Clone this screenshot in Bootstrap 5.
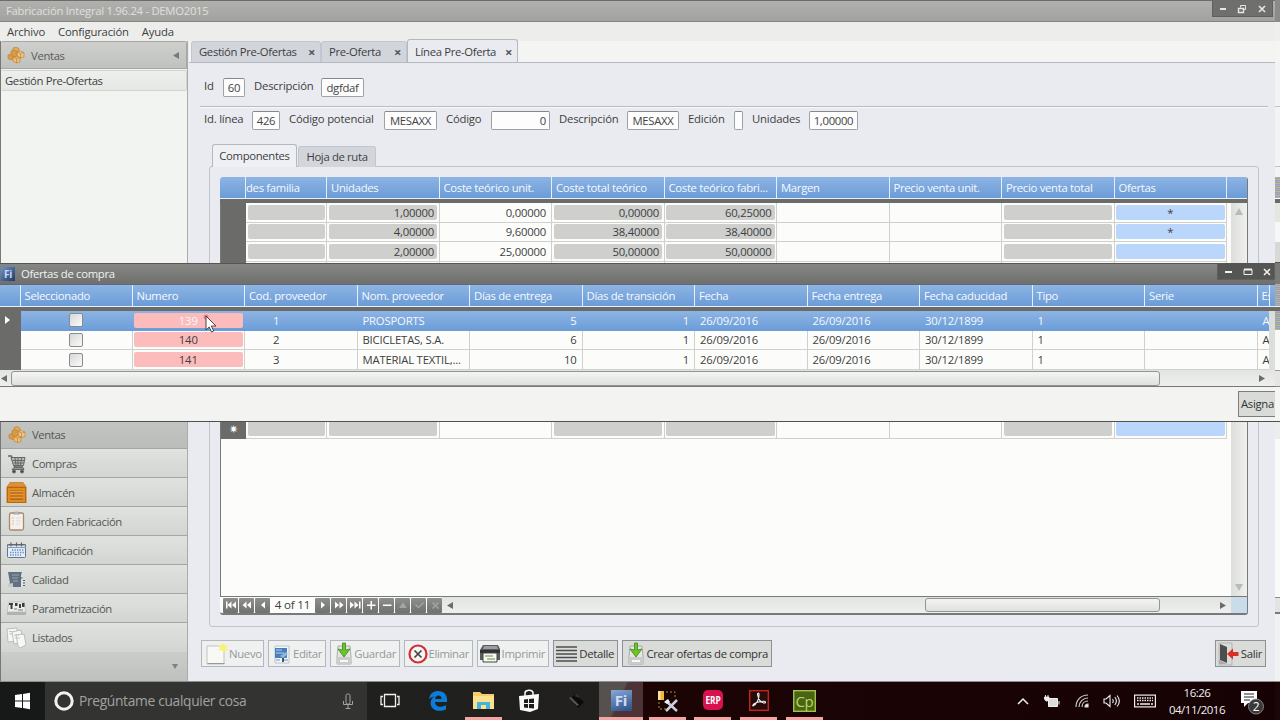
<!DOCTYPE html>
<html lang="es">
<head>
  <meta charset="UTF-8" />
  <meta name="viewport" content="width=device-width, initial-scale=1.0"/>
  <title>Fabricación Integral 1.96.24 - DEMO2015</title>
  <link href="https://cdn.jsdelivr.net/npm/bootstrap@5.3.0/dist/css/bootstrap.min.css" rel="stylesheet" />
  <style>
    :root {
      --blue-top: #8db4e3;
      --blue-bottom: #6b9cd8;
      --page: #e9ebf0;
      --dark: #6b6c6a;
      --line: #b4b8bf;
    }
    body {
      width: 1280px;
      height: 720px;
      overflow: hidden;
      font-family: "Open Sans", "Noto Sans", sans-serif;
      font-size: 11.3px;
      letter-spacing: -0.2px;
      line-height: 1.2;
      color: #3d3e3e;
      background: var(--page);
    }
    svg { display: block; flex: none; }

    /* ventana principal */
    .titlebar {
      height: 22px;
      border-top: 1px solid #6d6e6c;
      border-bottom: 1px solid #858683;
      background: linear-gradient(#b0b1ae, #a2a39f);
      color: #dfe0dd;
      padding-left: 6px;
      letter-spacing: -0.28px;
    }
    .winbtns { background: #6f706e; border: 1px solid #5f605e; border-top: 0; }
    .menubar { height: 19px; background: #edeeeb; padding-left: 7px; gap: 13px; }

    /* barra lateral */
    .sidebar {
      width: 188px;
      margin-right: 1px;
      background: #f2f4f1;
      border-left: 1px solid #777;
      border-right: 1px solid #a9abac;
    }
    .side-head {
      height: 28px;
      background: linear-gradient(#cfd0cd, #bfc1be);
      border: 1px solid #a5a7a4;
      border-width: 1px 1px 1px 0;
      border-radius: 2px 2px 0 0;
      padding: 1px 7px 0 6px;
      color: #5a5b5a;
    }
    .side-item {
      height: 21px;
      margin-top: 1px;
      padding-left: 4px;
      letter-spacing: -0.34px;
      background: linear-gradient(#eeefec, #e6e8e5);
      border: 1px solid #d2d4d1;
      border-left: 0;
      border-radius: 2px;
    }
    .side-nav .list-group-item {
      height: 29px;
      padding: 1px 0 0 5px;
      font-size: 11.3px;
      letter-spacing: -0.4px;
      color: #555655;
      border: 0;
      border-bottom: 1px solid #a4a6a3;
      background: linear-gradient(#e0e2df, #d3d5d2);
      gap: 5px;
      display: flex;
      align-items: center;
    }
    .side-nav .list-group-item.picked { background: linear-gradient(#c3c5c2, #bbbdba); }
    .side-foot { height: 29px; background: linear-gradient(#cbcdca, #bec0bd); padding: 0 9px 0 0; }

    /* pestañas */
    .doc-tabs { height: 22px; background: #f4f5f3; border-bottom: 1px solid var(--line); padding-left: 2px; }
    .doc-tabs .nav-link, .sub-tabs .nav-link {
      padding: 0 5px 0 7px;
      border: 1px solid #c3c6cd;
      border-bottom: 0;
      border-radius: 3px 3px 0 0;
      background: #d3d5dc;
      color: #3d3e3e;
      letter-spacing: -0.34px;
      display: flex;
      align-items: center;
      justify-content: space-between;
      margin: 0;
    }
    .doc-tabs .nav-link { height: 21px; }
    .doc-tabs .nav-link.active { height: 23px; background: var(--page); border-color: var(--line); color: #3d3e3e; padding-top: 2px; }
    .doc-tabs .nav-link span { font-size: 13px; font-weight: 700; line-height: 10px; color: #555; }
    .sub-tabs { height: 22px; margin-left: 23px; border: 0; gap: 1px; }
    .sub-tabs .nav-link { height: 21px; justify-content: center; padding: 0; }
    .sub-tabs .nav-link.active { height: 23px; background: #eef0f4; border-color: var(--line); color: #3d3e3e; z-index: 1; position: relative; }

    /* campos */
    .fields { display: grid; align-items: center; margin-left: 6px; }
    .fields-head { grid-template-columns: 28px 22px 76px 43px; height: 19px; margin-top: 15px; }
    .fields-line { grid-template-columns: 57px 28px 104px 53px 54px 59px 77px 52px 55px 9px 66px 49px; height: 19px; margin-top: 3px; }
    .fields label { padding: 0 0 3px 9px; white-space: nowrap; }
    .fields .form-control {
      height: 19px;
      min-height: 0;
      padding: 0 3px;
      font-size: 11.3px;
      line-height: 16px;
      letter-spacing: -0.3px;
      color: #444;
      border: 1px solid #9fa2a5;
      border-top-color: #85878a;
      border-radius: 2px;
      background: #fcfdfc;
      text-align: center;
    }
    .rule { height: 2px; margin: 9px 12px 0 11px; border-top: 1px solid #b9bcc2; border-bottom: 1px solid #f7f8fa; }

    /* rejillas */
    .panel { width: 1050px; height: 461px; margin-left: 20px; border: 1px solid #bfc3ca; border-radius: 3px; padding: 10px; }
    .gridbox { width: 1028px; height: 438px; border: 1px solid #77797b; border-width: 0 1px 2px 0; border-radius: 3px; background: #fcfdfb; overflow: hidden; }
    .g-head { height: 22px; background: linear-gradient(var(--blue-top), var(--blue-bottom)); border-bottom: 1px solid #e8f0fa; color: #f6fafe; letter-spacing: -0.3px; }
    .g-head > div {
      border-right: 1.500px solid #e6effa;
      padding: 0 0 0 4px;
      white-space: nowrap;
      overflow: hidden;
      display: flex;
      align-items: center;
      flex: none;
    }
    #compHead { padding-left: 1px; }
    #compHead > div:nth-child(2) { padding-left: 0; }
    #compHead > div:last-child { border-right: 0; }
    .g-band { height: 4px; background: var(--dark); }
    .g-row { height: 19.65px; }
    .g-row > div { flex: none; border-right: 1px solid #cfd1cf; border-bottom: 1px solid #cfd1cf; white-space: nowrap; }
    .g-row > .g-mark { background: var(--dark); border-color: var(--dark); color: #fff; }
    .pill { border-radius: 2px; height: 15px; width: 100%; background: #cfd0ce; }
    .pill.sky { background: #bbd6fb; }
    .pill.rose { background: #fdbcbc; }
    .g-row.current { background: linear-gradient(var(--blue-top), var(--blue-bottom)); color: #f4f8fd; }
    .g-row.current > div:not(.g-mark) { border-color: transparent; }
    .num { justify-content: flex-end; }
    .vbar { width: 16px; background: linear-gradient(90deg, #dcdedb, #f0f1ef); }
    .hbar { background: linear-gradient(#e2e4e1, #eff0ee); }
    .thumb { border: 1px solid #939593; border-radius: 3px; background: linear-gradient(#f4f5f3, #dfe1de); }
    .navi { height: 17px; border-top: 1px solid #77797b; }
    .navi .btn {
      width: 15px;
      height: 15px;
      padding: 0;
      border: 0;
      border-radius: 1px;
      background: linear-gradient(#8e908e, #6f716f);
      display: flex;
      align-items: center;
      justify-content: center;
    }

    /* botonera */
    .tools { margin: 13px 14px 0 12px; gap: 4px; }
    .tools .btn {
      height: 27px;
      padding: 0 3px;
      font-size: 11.4px;
      letter-spacing: -0.36px;
      color: #333;
      background: #dadcda;
      border: 1px solid #8e9193;
      border-radius: 0;
      display: flex;
      align-items: center;
      justify-content: space-between;
      white-space: nowrap;
    }
    .tools .btn.off { background: #eff1f1; border-color: #b4b8bc; color: #969899; }

    /* ventana de ofertas */
    .offers { left: 0; top: 263px; width: 1275px; height: 159px; background: #f3f4f2; border-bottom: 1px solid #50514f; overflow: hidden; }
    .offers-title { height: 22px; border-top: 1px solid #555654; background: linear-gradient(#868785, #6f706d); color: #f2f2f0; border-bottom: 1px solid #5f6a78; letter-spacing: -0.3px; }
    .offers .btn { height: 26px; width: 37px; font-size: 11.3px; letter-spacing: -0.3px; padding: 0 0 0 2px; border-radius: 0; border: 1px solid #7c7e7e; border-right: 0; background: #d9dbd9; color: #333; text-align: left; }
    .fi { width: 14px; height: 14px; background: linear-gradient(135deg, #6f92c4, #1f3a6b); color: #c9daf2; font-weight: 700; font-size: 10px; line-height: 14px; text-align: center; }
    .chk { width: 14px; height: 14px; border: 1px solid #8a8c8b; border-radius: 2px; background: linear-gradient(135deg, #d5d7d5, #fbfbfb); }

    /* franja del borde derecho */
    .edge { left: 1275px; top: 0; width: 5px; height: 720px; }
    .noisy { background: repeating-linear-gradient(#b7a6b5 0 1px, #8fae9a 1px 2px, #c9b08f 2px 3px, #8ba3cf 3px 4px); }

    /* barra de tareas */
    .taskbar { height: 38px; background: linear-gradient(90deg, #1d1f1e 0, #21201f 600px, #1c0405 644px, #160204 100%); }
    .start { width: 45px; background: #171918; }
    .search { width: 322px; background: #333432; color: #a1a2a0; font-size: 13.8px; letter-spacing: -0.33px; }
    .app { width: 37px; height: 38px; border-bottom: 3px solid transparent; display: flex; align-items: center; justify-content: center; flex: none; padding-top: 2px; }
    .app.open { border-color: #f4a4a3; }
    .app.front { width: 44px; background: linear-gradient(115deg, #56504f 45%, #4d3336 50%); }
    .fi-big { width: 21px; height: 21px; background: linear-gradient(160deg, #88a9d4, #2c4d86); color: #cddcf0; font-weight: 700; font-size: 15px; line-height: 21px; text-align: center; }
    .clock { width: 60px; color: #f0f0f0; font-size: 11.5px; letter-spacing: -0.5px; line-height: 17px; }
  </style>
</head>
<body class="position-relative d-flex flex-column">

  <header class="titlebar d-flex justify-content-between">
    <div class="d-flex align-items-center">Fabricación Integral 1.96.24 - DEMO2015</div>
    <div class="winbtns d-flex align-items-center justify-content-around" style="width:61px;height:16px;margin-right:7px">
      <svg width="10" height="10"><path d="M2 5h6" stroke="#e6e6e4" stroke-width="2"/></svg>
      <svg width="10" height="10" fill="none" stroke="#e6e6e4"><path d="M3.500 3.500v-2h5v4h-2"/><path d="M1.500 4.500h5v4h-5z" stroke-width="1.400"/></svg>
      <svg width="10" height="10"><path d="M2 2l6 6M8 2l-6 6" stroke="#e6e6e4" stroke-width="1.600"/></svg>
    </div>
  </header>

  <nav class="menubar d-flex align-items-center">
    <span>Archivo</span><span>Configuración</span><span>Ayuda</span>
  </nav>

  <div class="d-flex flex-grow-1" style="min-height:0">
    <aside class="sidebar d-flex flex-column flex-shrink-0">
      <div class="side-head d-flex align-items-center">
        <svg width="18" height="17" viewBox="0 0 18 17"><use href="#boxes"/></svg>
        <span class="flex-grow-1" style="padding-left:6px;letter-spacing:-0.35px">Ventas</span>
        <svg width="6" height="7"><path d="M6 0v7L0 3.500z" fill="#777978"/></svg>
      </div>
      <div class="side-item d-flex align-items-center">Gestión Pre-Ofertas</div>
      <div class="side-nav list-group list-group-flush mt-auto rounded-0">
        <div class="list-group-item picked">
          <svg width="21" height="20" viewBox="-2 -1 21 19">
            <g id="boxes">
              <path d="M6 1l3-1 3 1.500v4l-3 1-3-1.500z" fill="#e2a95a" stroke="#b57d33" stroke-width=".6"/>
              <path d="M10 5l3.500-1L17 5.500V10l-3.500 1L10 9.500z" fill="#f0c483" stroke="#b57d33" stroke-width=".6"/>
              <path d="M1 8l3-1 3 1.500V12l-3 1-3-1.500z" fill="#dd9c43" stroke="#b57d33" stroke-width=".6"/>
              <path d="M6 10l3.500-1 3.500 1.500V15l-3.500 1L6 14.500z" fill="#f0bd72" stroke="#b57d33" stroke-width=".6"/>
              <path d="M4 4l3-1 3 1.500V9L7 10 4 8.500z" fill="#d99a45" stroke="#b57d33" stroke-width=".6"/>
              <path d="M6 10l3.500 1.500L13 10.500M9.500 11.500V16M10 5l3.500 1.500L17 5.500M13.500 6.500V11" stroke="#b57d33" stroke-width=".6" fill="none"/>
            </g>
          </svg>Ventas</div>
        <div class="list-group-item">
          <svg width="21" height="20" fill="none" stroke="#656766">
            <path d="M2 2h3.500l3 11h8.500" stroke-width="1.400"/><path d="M5 3.500h14l-1.500 8H7.500z" fill="#b9bbba"/>
            <path d="M9 4l1 7M12 4v7M15.500 4l-1 7M6.500 6.500h12M7.500 9H18"/><path d="M8 13.500h9l1 2H6z" fill="#999"/>
            <circle cx="8" cy="17.500" r="1.500" fill="#444"/><circle cx="16" cy="17.500" r="1.500" fill="#444"/>
          </svg>Compras</div>
        <div class="list-group-item">
          <svg width="21" height="22"><path d="M4 0h13l3.500 5v16H.5V5z" fill="#c9791d"/><path d="M4 .5h13l2.500 4h-18z" fill="#d9923c"/><path d="M1.500 5.500h18v15h-18z" fill="#e08c22" stroke="#b4680f"/><path d="M4 8h13v10H4z" fill="#b76a14"/><path d="M4 9.500h13M4 12.500h13M4 15.500h13" stroke="#e59a3c" stroke-width="1.500"/></svg>Almacén</div>
        <div class="list-group-item">
          <svg width="21" height="21"><rect x="3.500" y="2" width="14" height="17" rx="1.500" fill="#f4f1ee" stroke="#a98b6c" stroke-width="1.300"/><path d="M7.500 3c0-2.600 6-2.600 6 0z" fill="#d0d2d4" stroke="#888" stroke-width=".7"/><path d="M6 7h2M6 10h2M6 13h2" stroke="#e9b6a6"/><path d="M10 7h5M10 10h5M10 13h4" stroke="#dedcd9"/></svg>Orden Fabricación</div>
        <div class="list-group-item">
          <svg width="21" height="20"><rect x="1.500" y="3.500" width="18" height="13" rx="1" fill="#e5ecf5" stroke="#667587"/><path d="M1 6.500h19" stroke="#8b98a8"/><path d="M1 4h19M5 1.500v4M10.500 1.500v4M15.500 1.500v4" stroke="#566474" stroke-width="1.200"/><path d="M6 9h12M4 11.500h14M4 14h11" stroke="#5a8ed0" stroke-width="1.400" stroke-dasharray="1.300 1.200"/></svg>Planificación</div>
        <div class="list-group-item">
          <svg width="21" height="20"><path d="M2 2h14l-1 3v12H6l-4-1 2-3z" fill="#63717f"/><path d="M2 14l5-1v4H2z" fill="#c4cad0"/><path d="M6 5h7M6 8h6M7 11h5" stroke="#9aa7b3"/><path d="M15 9h4v8h-4z" fill="#dfe2e4"/><path d="M14.500 8h3M17 10.500h3M17 13h3M17 15.500h3" stroke="#4c5762" stroke-dasharray="2 1"/></svg>Calidad</div>
        <div class="list-group-item">
          <svg width="21" height="20"><path d="M3 3h15l2 10H1z" fill="#ecedeb" stroke="#b9bbb8" stroke-width=".8"/><path d="M1 13h19v3H1z" fill="#b1b3b1"/><path d="M3 4h4v2H3zM4.500 6h2v4h-2zM9 4h2.500v3H9zM13 5h2v4h-2zM16 4h2.500v4H16z" fill="#3c3e3e"/><path d="M8 10h3M12 11h5" stroke="#777"/></svg>Parametrización</div>
        <div class="list-group-item">
          <svg width="21" height="22"><g stroke="#b0b2b0" stroke-width=".8" fill="#f6f7f6"><path d="M1 2l10-1v13l-9 1z"/><path d="M6 5l9-2 2 12-9 2z"/><path d="M10 8l8-1 2 11-6 3-2-2z"/></g><path d="M3 4.500h6M3 7h4M8 8h5M9 11h5" stroke="#c3c5c4"/></svg>Listados</div>
      </div>
      <div class="side-foot d-flex align-items-center justify-content-end"><svg width="6" height="5"><path d="M0 0h6L3 5z" fill="#7e807f"/></svg></div>
    </aside>

    <main class="flex-grow-1" style="min-width:0">
      <div class="doc-tabs nav nav-tabs align-items-end flex-nowrap">
        <div class="nav-link" style="width:130px">Gestión Pre-Ofertas <span>×</span></div>
        <div class="nav-link" style="width:86px">Pre-Oferta <span>×</span></div>
        <div class="nav-link active" style="width:111px">Línea Pre-Oferta <span>×</span></div>
      </div>

      <div class="fields fields-head">
        <label>Id</label><input class="form-control" value="60">
        <label>Descripción</label><input class="form-control" value="dgfdaf">
      </div>
      <div class="rule"></div>
      <div class="fields fields-line">
        <label>Id. línea</label><input class="form-control" value="426">
        <label>Código potencial</label><input class="form-control" value="MESAXX">
        <label>Código</label><input class="form-control text-end" value="0">
        <label>Descripción</label><input class="form-control" value="MESAXX">
        <label>Edición</label><input class="form-control" value="">
        <label>Unidades</label><input class="form-control" value="1,00000">
      </div>

      <div class="sub-tabs nav nav-tabs align-items-end" style="margin-top:14px">
        <div class="nav-link active" style="width:85px">Componentes</div>
        <div class="nav-link" style="width:78px">Hoja de ruta</div>
      </div>
      <div class="panel">
        <div class="gridbox d-flex flex-column">
          <div class="g-head d-flex" id="compHead"></div>
          <div class="g-band"></div>
          <div class="d-flex flex-grow-1" style="min-height:0">
            <div class="flex-grow-1" id="compBody" style="border-left:1px solid #77797b"></div>
            <div class="vbar d-flex flex-column justify-content-between align-items-center py-1">
              <svg width="8" height="8"><path d="M0 8h8L4 1z" fill="#b9bbb9"/></svg>
              <svg width="8" height="8"><path d="M0 0h8L4 7z" fill="#b9bbb9"/></svg>
            </div>
          </div>
          <div class="navi d-flex align-items-center">
            <div class="d-flex align-items-center" id="navi" style="width:222px;gap:1px;padding-left:3px"></div>
            <div class="hbar d-flex align-items-center flex-grow-1 h-100" style="padding:0 5px">
              <svg width="6" height="7"><path d="M6 0v7L0 3.500z" fill="#6b6d6b"/></svg>
              <div class="thumb" style="width:235px;height:14px;margin-left:472px"></div>
              <svg class="ms-auto" width="6" height="7"><path d="M0 0v7l6-3.500z" fill="#6b6d6b"/></svg>
            </div>
            <div class="h-100" style="width:16px;background:#c9dcea"></div>
          </div>
        </div>
      </div>

      <div class="tools d-flex">
        <button class="btn off" style="width:63px"><svg width="24" height="24"><path d="M2 4h17v18H2z" fill="#f8f9f5" stroke="#c2c4bd"/><path d="M3 21h16l1 1H2z" fill="#999"/><path d="M18 1l1.500 2.500L23 3l-1.500 3 1.500 3-3-.5L18 11l-1-3-4 .5L15 6l-2-3h3.500z" fill="#f6f27c"/></svg>Nuevo</button>
        <button class="btn off" style="width:58px"><svg width="20" height="22"><path d="M3 3h14v17H3z" fill="#f4f7fa" stroke="#b9c4d0"/><path d="M3 5h12v10H3z" fill="#4a7fbd"/><path d="M4 7h6M4 10h8" stroke="#b7d0ec"/><path d="M8 13l6-4 2 2-5 4z" fill="#8fb6e0"/><path d="M4 17h4M11 17h5" stroke="#6f96c2"/><path d="M11 15v4" stroke="#222" stroke-width="1.500"/></svg>Editar</button>
        <button class="btn off" style="width:70px"><svg width="20" height="24"><use href="#save"/></svg>Guardar</button>
        <button class="btn off" style="width:69px"><svg width="20" height="22"><circle cx="10" cy="11" r="8.500" fill="#f7f4f4" stroke="#d22c35" stroke-width="2.200"/><path d="M6.500 7.500l7 7M13.500 7.500l-7 7" stroke="#444" stroke-width="1.700"/></svg>Eliminar</button>
        <button class="btn off" style="width:72px;padding-left:1px"><svg width="22" height="22"><path d="M4 2h15l2 4v11H1V7z" fill="#595b5c"/><path d="M5 3h13l1 3H4z" fill="#9b9d9e"/><path d="M1 7h20v3H1z" fill="#2e3031"/><path d="M4 10h14v9H4z" fill="#f6f8f3" stroke="#444"/><path d="M6 13h8M8 16h8" stroke="#94b47a" stroke-width="1.500"/></svg>Imprimir</button>
        <button class="btn" style="width:65px;padding-left:2px"><svg width="21" height="18"><path d="M0 2h21M0 5.500h21M0 9h21M0 12.500h21M0 16h21" stroke="#4c4e4e" stroke-width="1.300"/></svg>Detalle</button>
        <button class="btn" style="width:150px"><svg width="20" height="24"><g id="save"><path d="M4 4h12l1 11v7H3v-7z" fill="#e2e5e3" stroke="#9da09e" stroke-width=".8"/><path d="M3 15h14v7H3z" fill="#c9ccca"/><path d="M6 18h8v2H6z" fill="#f7f8f7"/><path d="M8.500 1h3v7l4.500-1-6 8-6-8 4.500 1z" fill="#6cc32c" stroke="#3f8c14" stroke-width=".8"/></g></svg>Crear ofertas de compra</button>
        <button class="btn ms-auto" style="width:51px;padding-left:1px"><svg width="22" height="24"><path d="M2 1h13v22H2z" fill="#d9dbda" stroke="#9a9c9b" stroke-width=".6"/><path d="M3 2l7 3v16l-7-3z" fill="#4c4e4e"/><path d="M2 18l8 4h-8z" fill="#aaa"/><path d="M10 12l6-5.500V10h5.500v4H16v3.500z" fill="#da2f27"/></svg>Salir</button>
      </div>
    </main>
  </div>

  <div style="height:1px;background:#8d8f8e"></div>
  <footer class="taskbar d-flex align-items-center">
    <div class="start h-100 d-flex align-items-center justify-content-center">
      <svg width="16" height="18"><path d="M0 3l7-1v6.500H0zM8 2l7-1.200v7.700H8zM0 9.500h7V16l-7-1zM8 9.500h7v7.700L8 16z" fill="#fff"/></svg>
    </div>
    <div class="search h-100 d-flex align-items-center">
      <svg width="22" height="22" style="margin:0 4px 0 8px"><circle cx="11" cy="11" r="8.200" fill="none" stroke="#f2f2f1" stroke-width="3"/></svg>
      <span class="flex-grow-1">Pregúntame cualquier cosa</span>
      <svg width="12" height="17" fill="none" stroke="#a3a4a2" style="margin-right:13px"><rect x="4" y="1" width="4" height="10" rx="1.500"/><path d="M1.500 8v3.500h9V8M6 11.500v4M3.500 15.500h5"/></svg>
    </div>
    <div class="app" style="margin-left:4px"><svg width="20" height="16" fill="none" stroke="#f0f0f0" stroke-width="1.300"><path d="M4.500 1.500h11v12h-11zM3 3.500H1v8h2M17 3.500h2v8h-2"/></svg></div>
    <div class="app" style="margin-left:11px"><svg width="20" height="21"><path d="M1 9C2 3 6 1 10 1c6 0 9 4 9 8.500V12H7c0 3 2.500 4.800 5.500 4.800 2.300 0 4-.6 5.500-1.500v4c-2 1-4 1.500-6.500 1.500C6 20.800 2.600 17.500 2.600 13c0-3 1.600-5.500 4-6.600C4.500 6.800 2.500 7.500 1 9zm6 0h6.500c0-2.500-1.200-3.600-3.100-3.600C8.500 5.400 7.300 7 7 9z" fill="#0b7cd8"/></svg></div>
    <div class="app open" style="margin-left:9px"><svg width="21" height="19"><path d="M0 1h7l2 2h12v15H0z" fill="#f3cf6c"/><path d="M0 5h21v13H0z" fill="#fbe08f"/><path d="M4 11h13v7h-4v-4H8v4H4z" fill="#45b4d8"/></svg></div>
    <div class="app" style="margin-left:8px"><svg width="20" height="23"><path d="M0 7l20-2-1 15-8 3-10-2z" fill="#fafafa"/><path d="M6 7V4c0-3 7-4 8-.5V6" fill="none" stroke="#fafafa" stroke-width="1.500"/><path d="M5 10.500l4-.5v4H5zM10 10l5-.6V14h-5zM5 15h4v4l-4-.5zM10 15h5v4.600L10 19z" fill="#1d1f1e"/></svg></div>
    <div class="app" style="margin-left:10px"><svg width="20" height="20"><path d="M4 8l5-5 9 8-6 6z" fill="#0a0b0b"/><path d="M3 7l2-1 8 8-2 1z" fill="#555756"/><path d="M8 5l3-2 3 4z" fill="#323433"/></svg></div>
    <div class="app open front" style="margin-left:5px"><div class="fi-big">Fi</div></div>
    <div class="app open" style="margin-left:6px"><svg width="22" height="22"><path d="M9 2h9v6M2 12v7h7" fill="none" stroke="#8d9a35" stroke-dasharray="2 2"/><path d="M1 1h6v9H1z" fill="#f0b93c"/><path d="M1 1h2.500v9H1z" fill="#fbe39a"/><path d="M9 11l11 10M20 10L9 21" stroke="#c9d2dc" stroke-width="2.500"/><path d="M7 12l4-3 2 3-3 2z" fill="#eef1f4"/></svg></div>
    <div class="app open" style="margin-left:8px"><svg width="20" height="21"><rect width="20" height="20" rx="5" fill="#d8124e"/><text x="10" y="14" text-anchor="middle" font-size="10" font-weight="700" fill="#fff" textLength="15" lengthAdjust="spacingAndGlyphs">ERP</text></svg></div>
    <div class="app open" style="margin-left:9px"><svg width="20" height="21"><rect x=".7" y=".7" width="18.600" height="19.600" fill="#260d0c" stroke="#c4231c" stroke-width="1.400"/><path d="M4 16c3-1 6.500-7 6-12-.2-1.500-1.800-1-1.400.8C9.500 9 12 12.800 15.500 13c1.600 0 1.300-1.700-.5-1.700-4 0-8 1.200-10.500 3-1 .9-.8 1.700-.5 1.700z" fill="none" stroke="#f2eeee" stroke-width="1.100"/></svg></div>
    <div class="app open" style="margin-left:9px"><svg width="23" height="22"><rect x=".7" y=".7" width="21.600" height="20.600" fill="#4c6217" stroke="#9fc34a" stroke-width="1.400"/><text x="11.500" y="16.500" text-anchor="middle" font-size="15" fill="#b6dc57">Cp</text></svg></div>
    <div class="d-flex align-items-center ms-auto" style="margin-right:15px">
      <svg width="12" height="8" style="margin-right:15px"><path d="M1 7l5-5 5 5" fill="none" stroke="#eee" stroke-width="1.500"/></svg>
      <svg width="16" height="15" style="margin-right:15px" fill="none" stroke="#f1f1f1"><path d="M4.500 4.500h9v8h-9z" fill="#dcdcdc"/><path d="M15 7v3.500"/><path d="M.5 3h4.500v2l-1.500 2h-1.500L.5 5zM1.500 1v2M4 1v2" fill="#f1f1f1" stroke-width=".9"/></svg>
      <svg width="14" height="14" style="margin-right:14px" fill="none" stroke="#cfcfcf" stroke-width="1.200"><path d="M1 13C1 6 6 1 13 1M4 13c0-5 4-9 9-9M7 13c0-3.500 2.500-6 6-6"/><path d="M10 13c0-2 1-3 3-3v3z" fill="#fff"/></svg>
      <svg width="17" height="14" style="margin-right:14px" fill="none" stroke="#eee" stroke-width="1.100"><path d="M1 5h2l4-3.500v11L3 9H1z"/><path d="M9.500 5c1 1.300 1 2.700 0 4M11.800 3c2 2.500 2 5.500 0 8M14 1.500c3 3.500 3 7.500 0 11"/></svg>
      <svg width="22" height="14" style="margin-right:11px"><rect x=".6" y="1.100" width="20.800" height="11.800" fill="none" stroke="#eee" stroke-width="1.200"/><path d="M3 4h16M3 6.500h16" stroke="#eee" stroke-width="1.300" stroke-dasharray="1.500 1"/><path d="M3 10h2M6 10h10M17 10h2" stroke="#eee" stroke-width="1.300"/></svg>
      <div class="clock text-center">16:26<br>04/11/2016</div>
      <svg width="24" height="27" style="margin-left:14px"><path d="M0 3h16v12H7l-4 4v-4H0z" fill="#fff"/><path d="M3 6h10M3 9h10M3 12h6" stroke="#222"/><circle cx="15" cy="18.500" r="7.500" fill="#39393b" stroke="#9a9a9a" stroke-width=".8"/><text x="15" y="23" text-anchor="middle" font-size="12" fill="#fff">2</text></svg>
    </div>
  </footer>

  <!-- ventana flotante: ofertas de compra -->
  <section class="offers position-absolute d-flex flex-column">
    <div class="offers-title d-flex align-items-center flex-shrink-0">
      <div class="fi" style="margin:0 6px 0 1px">Fi</div>
      <span class="flex-grow-1">Ofertas de compra</span>
      <div class="winbtns d-flex align-items-center justify-content-between align-self-start" style="width:58px;height:16px;padding:0 2px 0 5px;background:#555654">
        <svg width="10" height="10"><path d="M2 5h7" stroke="#f2f2f0" stroke-width="2"/></svg>
        <svg width="10" height="10"><path d="M1 2.500h8v5H1z" stroke="#f2f2f0" fill="none"/><path d="M1 2.500h8" stroke="#f2f2f0" stroke-width="2"/></svg>
        <svg width="10" height="10"><path d="M2 2l6 6M8 2l-6 6" stroke="#f2f2f0" stroke-width="1.600"/></svg>
      </div>
    </div>
    <div class="g-head d-flex flex-shrink-0" id="offHead"></div>
    <div class="g-band flex-shrink-0"></div>
    <div class="d-flex" style="height:59px;background:#fcfdfb">
      <div class="overflow-hidden" id="offBody" style="width:1269px"></div>
      <div class="flex-grow-1" style="background:#dcdedc"></div>
    </div>
    <div class="hbar d-flex align-items-center flex-shrink-0" style="height:17px;padding:0 10px 0 1px;border-bottom:1px solid #777977">
      <svg width="6" height="7"><path d="M6 0v7L0 3.500z" fill="#6b6d6b"/></svg>
      <div class="thumb" style="width:1149px;height:15px;margin-left:4px"></div>
      <svg class="ms-auto" width="6" height="7"><path d="M0 0v7l6-3.500z" fill="#6b6d6b"/></svg>
    </div>
    <div style="padding:4px 0 0 1238px"><button class="btn">Asigna</button></div>
  </section>

  <div class="edge position-absolute d-flex flex-column" id="edge"></div>

  <svg class="position-absolute" style="left:203px;top:313px" width="15" height="22">
    <circle cx="3" cy="4" r="2.500" fill="#e2606e" opacity=".7"/>
    <path d="M3 3v14l3.200-3 2.300 5 2.200-1-2.300-5H13z" fill="#fff" stroke="#333" stroke-width=".9"/>
  </svg>

  <script>
    // columnas: título, ancho, clase de la celda, tipo de relleno
    const compCols = [
      ["", 25], ["des familia", 81, "", "pill"], ["Unidades", 112.5, "num", "pill"],
      ["Coste teórico unit.", 112.5, "num"], ["Coste total teórico", 112.5, "num", "pill"],
      ["Coste teórico fabri...", 112.5, "num", "pill"], ["Margen", 112.5], ["Precio venta unit.", 112.5],
      ["Precio venta total", 112.5, "", "pill"], ["Ofertas", 112.5, "justify-content-center", "pill sky"], ["", 21]
    ];
    const compRows = [
      ["", "", "1,00000", "0,00000", "0,00000", "60,25000", "", "", "", "*"],
      ["", "", "4,00000", "9,60000", "38,40000", "38,40000", "", "", "", "*"],
      ["", "", "2,00000", "25,00000", "50,00000", "50,00000", "", "", "", ""]
    ];
    while (compRows.length < 11) compRows.push(Array(10).fill(""));
    compRows.push(["✷"].concat(Array(9).fill("")));

    const offCols = [
      ["", 20.5], ["Seleccionado", 112], ["Numero", 112.5, "justify-content-center", "pill rose"],
      ["Cod. proveedor", 112.5, "cod"], ["Nom. proveedor", 112.5], ["Días de entrega", 112.5, "num"],
      ["Días de transición", 112.5, "num"], ["Fecha", 112.5], ["Fecha entrega", 112.5],
      ["Fecha caducidad", 112.5], ["Tipo", 112.5], ["Serie", 112.5], ["Es", 12]
    ];
    const offRows = [
      ["", "chk", "139", "1", "PROSPORTS", "5", "1", "26/09/2016", "26/09/2016", "30/12/1899", "1", "", "A"],
      ["", "chk", "140", "2", "BICICLETAS, S.A.", "6", "1", "26/09/2016", "26/09/2016", "30/12/1899", "1", "", "A"],
      ["", "chk", "141", "3", "MATERIAL TEXTIL,...", "10", "1", "26/09/2016", "26/09/2016", "30/12/1899", "1", "", "A"]
    ];

    function head(id, cols) {
      document.getElementById(id).innerHTML = cols.map(c => `<div style="width:${c[1]}px">${c[0]}</div>`).join("");
    }

    function cell(value, col, i) {
      const cls = col[2] || "";
      if (i === 0) return `<div class="g-mark d-flex align-items-center justify-content-center" style="width:${col[1]}px">${value}</div>`;
      if (value === "chk") return `<div class="d-flex align-items-center justify-content-center" style="width:${col[1]}px"><div class="chk"></div></div>`;
      if (col[3]) return `<div class="d-flex align-items-center" style="width:${col[1]}px;padding:0 1.5px"><div class="${col[3]} ${cls} d-flex align-items-center" style="padding:0 3px">${value}</div></div>`;
      const pad = cls === "cod" ? "0 4px 0 28px" : "0 5px";
      return `<div class="d-flex align-items-center overflow-hidden ${cls}" style="width:${col[1]}px;padding:${pad}">${value}</div>`;
    }

    function body(id, cols, rows, current) {
      document.getElementById(id).innerHTML = rows.map((r, n) =>
        `<div class="g-row d-flex ${n === current ? "current" : ""}">${r.map((v, i) => cell(v, cols[i], i)).join("")}</div>`).join("");
    }

    head("compHead", compCols);
    body("compBody", compCols, compRows, -1);
    head("offHead", offCols);
    offRows[0][0] = '<svg width="9" height="8"><path d="M0 0v8l5-4z" fill="#fff"/></svg>';
    body("offBody", offCols, offRows, 0);

    // navegador de registros
    const tri = (x, d) => d > 0 ? `M${x} 3.500v7l4-3.500z` : `M${x + 4} 3.500v7l-4-3.500z`;
    const glyphs = [
      ["M2 3.500h1.500v7H2z" + tri(3.5, -1) + tri(8, -1)], [tri(2.5, -1) + tri(7, -1)], [tri(5, -1)], null,
      [tri(5, 1)], [tri(3, 1) + tri(7.5, 1)], [tri(2, 1) + tri(6.5, 1) + "M11 3.500h1.500v7H11z"],
      ["M6.500 3h1.500v3.500h3.500v1.500H8v3.500H6.500V8H3V6.500h3.500z"], ["M3 6.500h8.500v1.500H3z"],
      ["M3 10h8L7 4z", 1], ["M3 7l1-1 2.500 2.500L11 4l1 1-5.500 5.500z", 1], ["M4 5l1-1 2.500 2.500L10 4l1 1-2.500 2.500L11 10l-1 1-2.500-2.500L5 11l-1-1 2.500-2.500z", 1]
    ];
    document.getElementById("navi").innerHTML = glyphs.map(g => g
      ? `<button class="btn"><svg width="14" height="14"><path d="${g[0]}" fill="${g[1] ? "#a3a5a3" : "#fff"}"/></svg></button>`
      : `<span class="text-center" style="width:43px;font-size:11.6px">4 of 11</span>`).join("");

    // tramos de la franja: alto y color
    const slices = [
      [22, "#8b8c8a"], [19, "#eef0ed"], [21, "#f5f6f4"], [44, "#f3f3f5"], [1, "#c3c5ca"], [59, "#f3f3f5"], [1, "#c3c5ca"], [10, "#f3f3f5"],
      [21, "noisy"], [1, "#fff"], [4, "#6b6c6a"], [19, "#e5e6e0"], [20, "#f6f7f6"], [20, "#d8d9d7"], [1, "#555654"], [21, "#7a7b79"],
      [22, "noisy"], [1, "#e8f0fa"], [4, "#6b6c6a"], [19, "noisy"], [40, "#f8f9f7"], [1, "#999"], [15, "#e6e7e5"], [1, "#888"], [34, "#f5f6f4"], [1, "#50514f"],
      [17, "#eceded"], [158, "#fafbf9"], [1, "#888"], [14, "#e2e4e1"], [2, "#77797b"], [67, "#f0f1f3"], [1, "#8d8f8e"], [38, "#1a0607"]
    ];
    document.getElementById("edge").innerHTML = slices.map(s =>
      `<div class="flex-shrink-0 ${s[1] === "noisy" ? "noisy" : ""}" style="height:${s[0]}px;background-color:${s[1]}"></div>`).join("");
  </script>
  <script src="https://cdn.jsdelivr.net/npm/bootstrap@5.3.0/dist/js/bootstrap.bundle.min.js"></script>
</body>
</html>
